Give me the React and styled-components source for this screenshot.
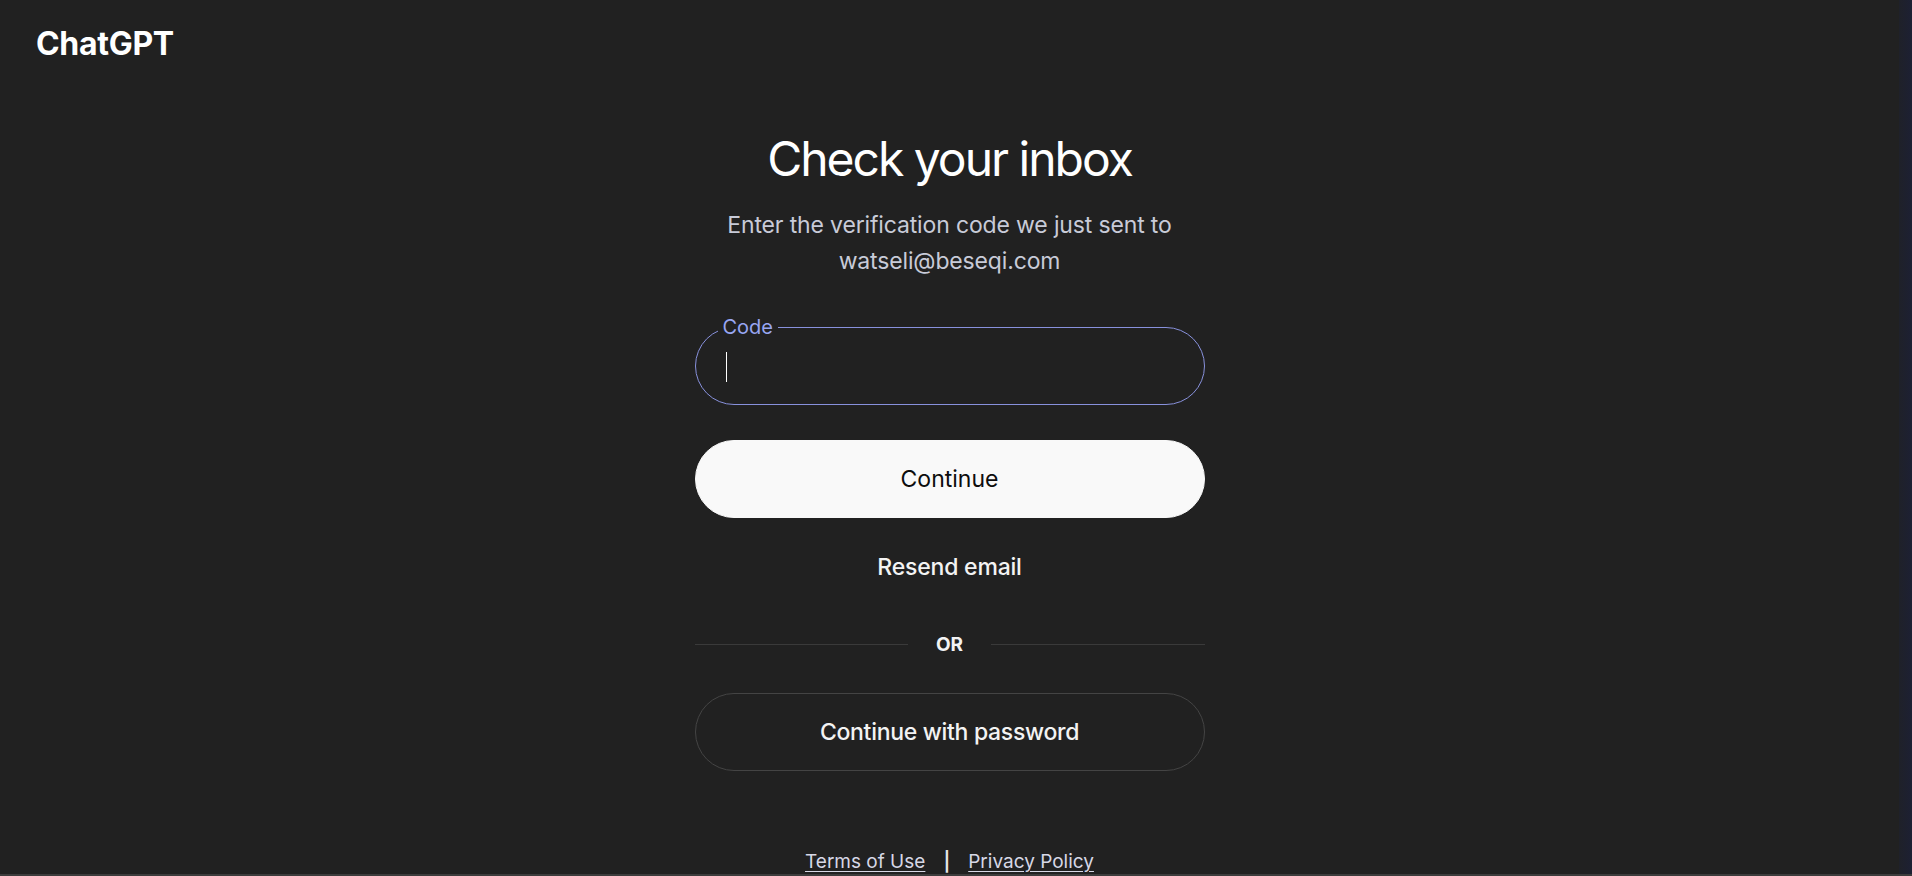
import React from 'react';
import styled, { createGlobalStyle } from 'styled-components';

const GlobalStyle = createGlobalStyle`
    html, body {
        margin: 0;
        padding: 0;
        background: #212121;
    }

    body {
        font-family: Inter, "Noto Sans", "Liberation Sans", sans-serif;
        color: #ececec;
        overflow: hidden;
    }
`;

const Page = styled.div`
    height: 100vh;
    background: #212121;
    display: flex;
    flex-direction: column;
`;

const Frame = styled.div`
    flex: 1;
    display: flex;
    min-height: 0;
`;

const Viewport = styled.div`
    flex: 1;
    display: flex;
    flex-direction: column;
`;

// right scroll track and bottom edge of the window
const ScrollTrack = styled.div`
    width: 13px;
    background: linear-gradient(90deg, #1f2129, #1d2033);
`;

const BottomEdge = styled.div`
    height: 2px;
    background: #3c3c3c;
`;

const Header = styled.header`
    padding: 26px 36px 0;
    height: 36px;
`;

const Logo = styled.div`
    font-size: 32px;
    line-height: 36px;
    font-weight: 700;
    letter-spacing: -0.3px;
    color: #ffffff;
`;

const Main = styled.main`
    display: flex;
    flex-direction: column;
    align-items: center;
    padding-top: 69px;
`;

const Title = styled.h1`
    margin: 0;
    font-size: 48px;
    line-height: 56px;
    font-weight: 400;
    letter-spacing: -2px;
    color: #ffffff;
`;

const Subtitle = styled.p`
    margin: 20px 0 0;
    font-size: 23px;
    line-height: 36px;
    letter-spacing: -0.15px;
    text-align: center;
    color: #c8cbd8;
`;

const Form = styled.form`
    width: 510px;
    display: flex;
    flex-direction: column;
    margin-top: 48px;
`;

const Field = styled.div`
    position: relative;
    height: 78px;
    border: 1px solid #8891dc;
    border-radius: 999px;
    box-sizing: border-box;
    display: flex;
    align-items: center;
`;

const FieldLabel = styled.label`
    position: absolute;
    left: 22px;
    top: -14px;
    padding: 0 5px;
    background: #212121;
    font-size: 20px;
    line-height: 26px;
    color: #98a6f2;
`;

const Input = styled.input`
    flex: 1;
    height: 100%;
    border: 0;
    outline: none;
    background: transparent;
    padding: 0 30px;
    font-family: inherit;
    font-size: 23px;
    color: #ffffff;
    caret-color: transparent;
`;

const Caret = styled.span`
    position: absolute;
    left: 30px;
    top: 24px;
    width: 1.5px;
    height: 30px;
    background: #ffffff;
`;

const Button = styled.button`
    height: 78px;
    border-radius: 999px;
    box-sizing: border-box;
    font-family: inherit;
    font-size: 23px;
    cursor: pointer;
    border: 1px solid ${p => (p.$primary ? '#f9f9f9' : '#444444')};
    background: ${p => (p.$primary ? '#f9f9f9' : 'transparent')};
    color: ${p => (p.$primary ? '#0d0d0d' : '#f3f3f3')};
    font-weight: ${p => (p.$primary ? 400 : 500)};
    letter-spacing: ${p => (p.$primary ? 0 : -0.3)}px;
    margin-top: ${p => p.$gap || 0}px;
`;

const LinkButton = styled.button`
    margin-top: 31px;
    height: 36px;
    border: 0;
    background: none;
    font-family: inherit;
    font-size: 23px;
    font-weight: 500;
    letter-spacing: -0.2px;
    color: #f3f3f3;
    cursor: pointer;
`;

const Divider = styled.div`
    margin-top: 44px;
    display: flex;
    align-items: center;
    gap: 28px;
    height: 30px;

    &::before,
    &::after {
        content: '';
        flex: 1;
        height: 1px;
        background: #3a3a3a;
    }

    span {
        font-size: 19px;
        font-weight: 700;
        color: #f3f3f3;
    }
`;

const Footer = styled.footer`
    margin-top: 76px;
    display: flex;
    align-items: center;
    gap: 18px;
    font-size: 19px;
    line-height: 30px;
    color: #d7d8e6;

    a {
        color: inherit;
        text-decoration: underline;
        text-underline-offset: 3px;
    }
`;

const Sep = styled.span`
    font-size: 19px;
    font-weight: 600;
    color: #e6e6e6;
`;

export default function App() {
    return (
        <>
            <GlobalStyle />
            <Page>
                <Frame>
                    <Viewport>
                        <Header>
                            <Logo>ChatGPT</Logo>
                        </Header>
                        <Main>
                            <Title>Check your inbox</Title>
                            <Subtitle>
                                Enter the verification code we just sent to
                                <br />
                                watseli@beseqi.com
                            </Subtitle>
                            <Form onSubmit={e => e.preventDefault()}>
                                <Field>
                                    <FieldLabel htmlFor="code">Code</FieldLabel>
                                    <Input id="code" name="code" readOnly />
                                    <Caret />
                                </Field>
                                <Button type="submit" $primary $gap={35}>Continue</Button>
                                <LinkButton type="button">Resend email</LinkButton>
                                <Divider><span>OR</span></Divider>
                                <Button type="button" $gap={34}>Continue with password</Button>
                            </Form>
                            <Footer>
                                <a href="#terms">Terms of Use</a>
                                <Sep>|</Sep>
                                <a href="#privacy">Privacy Policy</a>
                            </Footer>
                        </Main>
                    </Viewport>
                    <ScrollTrack />
                </Frame>
                <BottomEdge />
            </Page>
        </>
    );
}
